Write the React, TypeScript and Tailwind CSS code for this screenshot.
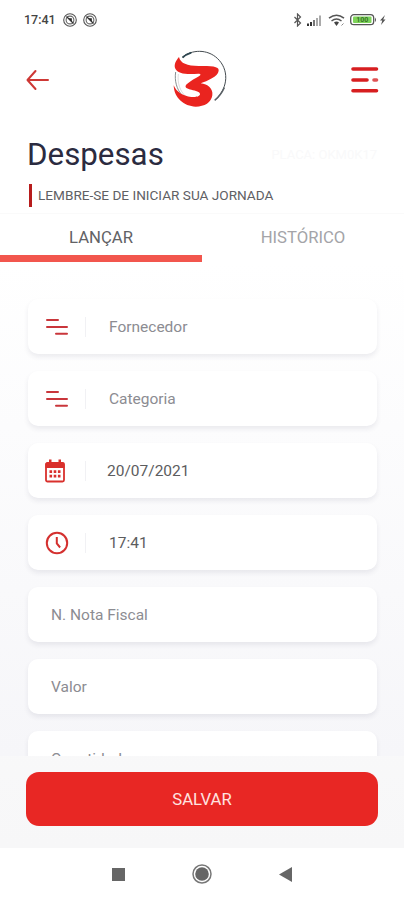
import type { ReactNode } from "react";

type Field = {
  label: string;
  icon?: ReactNode;
  filled?: boolean;
  textClass?: string;
};

const StaggerIcon = () => (
  <svg width="24" height="20" viewBox="0 0 24 20" stroke="#c9363b" strokeWidth="2" strokeLinecap="round">
    <path d="M2 3h11M2 10h20M11 16.700h11" />
  </svg>
);

const CalendarIcon = () => (
  <svg width="20" height="24" viewBox="0 0 20 24" fill="none" className="-ml-[3px]">
    <rect x="1" y="4" width="18" height="18.500" rx="1.500" stroke="#d9302c" strokeWidth="1.800" />
    <path d="M0.500 5q0-1.500 1.500-1.500h16q1.500 0 1.500 1.500v4h-19zM4 0.500h2.500v4H4zM13.500 0.500H16v4h-2.500z" fill="#d9302c" />
    <path d="M4.500 11.300h2.600v2.600H4.500zM8.700 11.300h2.600v2.600H8.700zM12.900 11.300h2.600v2.600h-2.600zM4.500 15.800h2.600v2.600H4.500zM8.700 15.800h2.600v2.600H8.700zM12.900 15.800h2.600v2.600h-2.600z" fill="#d9302c" />
  </svg>
);

const ClockIcon = () => (
  <svg width="24" height="24" viewBox="0 0 24 24" fill="none" stroke="#d4302f" strokeWidth="2">
    <circle cx="12" cy="12" r="10.200" />
    <path d="M11.800 6v6.500l3.300 4" />
  </svg>
);

const fields: Field[] = [
  { label: "Fornecedor", icon: <StaggerIcon /> },
  { label: "Categoria", icon: <StaggerIcon /> },
  { label: "20/07/2021", icon: <CalendarIcon />, filled: true, textClass: "-ml-[2px]" },
  { label: "17:41", icon: <ClockIcon />, filled: true },
  { label: "N. Nota Fiscal" },
  { label: "Valor" },
  { label: "Quantidade" },
];

// small round notification badge in the status bar
const Badge = () => (
  <svg width="14" height="14" viewBox="0 0 14 14" fill="none">
    <circle cx="7" cy="7" r="6.300" stroke="#555" strokeWidth="1.100" />
    <circle cx="7" cy="7" r="3.900" stroke="#666" strokeWidth="1.100" />
    <path d="M5 5.200h3.800V9z" fill="#222" />
    <path d="M3.500 3.500l7 7" stroke="#333" strokeWidth="1.200" />
  </svg>
);

function StatusBar() {
  return (
    <div className="flex h-10 items-center justify-between pr-[17px] pl-[24px]">
      <div className="flex items-center gap-[6px]">
        <span className="mr-px text-[12.500px] font-medium text-[#444]">17:41</span>
        <Badge />
        <Badge />
      </div>
      <svg width="94" height="14" viewBox="0 0 94 14" fill="none">
        <path d="M1.500 4l6 6L4.500 13V1l3 3-6 6" stroke="#555" strokeWidth="1.200" />
        <path d="M14 10.500h2V13h-2zM17 9h2v4h-2z" fill="#333" />
        <path d="M20 7h2v6h-2z" fill="#777" />
        <path d="M23 5h2v8h-2zM26 2.500h2V13h-2z" fill="#aaa" />
        <path d="M36 5.200q7.500-6 15 0M38.500 8q5-4 10 0" stroke="#555" strokeWidth="1.500" />
        <path d="M41 9.500q2.500-2 5 0L43.500 13z" fill="#444" />
        <path d="M48.500 12.500l2-2" stroke="#888" />
        <rect x="57.700" y="1.700" width="23" height="10" rx="3.200" stroke="#555" strokeWidth="1.300" />
        <path d="M82 4.500q2 2.300 0 4.500z" fill="#555" />
        <rect x="60" y="3.500" width="18.500" height="6.500" rx="1" fill="#7ed45a" />
        <text x="69.300" y="9.300" fontSize="7" fontWeight="700" textAnchor="middle" fill="#397529">100</text>
        <path d="M92 2l-5 5.500h2.300L88 12l4.500-5.500h-2.300z" fill="#555" />
      </svg>
    </div>
  );
}

function Logo() {
  return (
    <svg width="60" height="62" viewBox="0 0 180 186" fill="none">
      <path d="M36 28C66 4 112 3 142 31C177 64 176 117 137 155" stroke="#444b50" strokeWidth="3" />
      <path d="M38 29Q48 19 64 14" stroke="#2d4650" strokeWidth="5" />
      <path d="M134 157Q152 143 163 119" stroke="#5a6166" strokeWidth="4.500" />
      <path d="M17 72C13 98 20 125 37 142" stroke="#70777a" strokeWidth="2.500" />
      <path d="M25 78C22 105 29 128 47 145" stroke="#bbb" strokeWidth="1.500" />
      <path
        d="M27 27C31 46 52 54 86 54C122 54 148 54 146 68C144 86 112 98 92 106C113 108 130 122 127 142C124 164 104 176 77 176C42 175 12 150 11 112C19 132 38 144 64 147C80 148 90 145 90 138C90 131 77 128 64 125C45 121 43 115 51 108C62 98 77 91 88 84C93 80 93 77 85 77C54 80 22 79 15 60C12 48 18 38 27 27Z"
        fill="#ea241f"
      />
    </svg>
  );
}

function Header() {
  return (
    <header className="flex h-[78px] items-center justify-between pr-[25.500px] pl-[26px]">
      <svg width="26" height="22" viewBox="0 0 26 22" fill="none" stroke="#ce3835" strokeWidth="2" strokeLinecap="round" strokeLinejoin="round" className="mt-[2px]">
        <path d="M9.500 2L1.500 11l8 9M2 11h20" />
      </svg>
      <div className="mr-px">
        <Logo />
      </div>
      <svg width="29" height="28" viewBox="0 0 29 28" stroke="#d71e20" strokeWidth="3.600" strokeLinecap="round" className="mt-px">
        <path d="M3 3h23.500M3 14h14M3 24.800h23.500" />
        <path d="M24 14h2.500" stroke="#df5254" />
      </svg>
    </header>
  );
}

function FieldCard({ field }: { field: Field }) {
  return (
    <div className="flex h-[55px] shrink-0 items-center rounded-[10px] bg-white shadow-[0_3px_5px_rgba(50,50,93,0.090)]">
      {field.icon ? (
        <>
          <div className="flex w-[57px] justify-center">{field.icon}</div>
          <div className="mr-[23px] h-5 w-px bg-[#f1f1f4]" />
        </>
      ) : (
        <div className="w-[23px]" />
      )}
      <span className={`pt-[2px] text-[15.500px] ${field.filled ? "text-[#5c5c5e]" : "text-[#8c8c92]"} ${field.textClass ?? ""}`}>
        {field.label}
      </span>
    </div>
  );
}

export default function App() {
  return (
    <div className="flex h-[900px] w-[404px] flex-col overflow-hidden bg-white font-['Roboto','Liberation_Sans',sans-serif]">
      <StatusBar />
      <Header />

      <div className="flex h-[95px] flex-col px-[27px] pt-[17px]">
        <div className="flex items-center justify-between">
          <h1 className="text-[31.300px] leading-10 text-[#2b2b40]">Despesas</h1>
          <span className="text-[13px] text-[#f9f9fa]">PLACA: OKM0K17</span>
        </div>
        <div className="mt-[9px] ml-[2px] flex h-[23px] items-center border-l-[3px] border-[#b71c1c] pl-[6px]">
          <p className="text-[13.600px] text-[#606064]">LEMBRE-SE DE INICIAR SUA JORNADA</p>
        </div>
      </div>

      <nav className="flex h-[49px] shrink-0 border-t border-[#fafafa] text-[16.700px]">
        <button className="w-[202px] border-b-[7px] border-[#f2564d] pt-[6px] text-[#626265]">LANÇAR</button>
        <button className="w-[202px] border-b-[7px] border-transparent pt-[6px] text-[#a4a4a8]">HISTÓRICO</button>
      </nav>

      <main className="flex h-[586px] shrink-0 flex-col bg-linear-to-b from-white to-[#f7f7f8]">
        <div className="flex h-[494px] flex-col gap-[17px] overflow-hidden bg-linear-to-b from-white to-[#f6f6f9] pt-[37px] pr-[27px] pl-[28px]">
          {fields.map((field) => (
            <FieldCard key={field.label} field={field} />
          ))}
        </div>
        <div className="px-[26px] pt-4">
          <button className="h-[54px] w-full rounded-[13px] bg-[#e82724] pt-px text-[16.700px] text-[#ffe3e0]">SALVAR</button>
        </div>
      </main>

      <footer className="flex h-[52px] shrink-0 items-center justify-between bg-white px-[112px]">
        <div className="size-[13px] bg-[#666]" />
        <svg width="20" height="20" viewBox="0 0 20 20" fill="none">
          <circle cx="10" cy="10" r="9" stroke="#777" strokeWidth="1.500" />
          <circle cx="10" cy="10" r="6.800" fill="#666" />
        </svg>
        <svg width="13" height="15" viewBox="0 0 13 15" fill="#666">
          <path d="M13 0v15L0 7.500z" />
        </svg>
      </footer>
    </div>
  );
}
